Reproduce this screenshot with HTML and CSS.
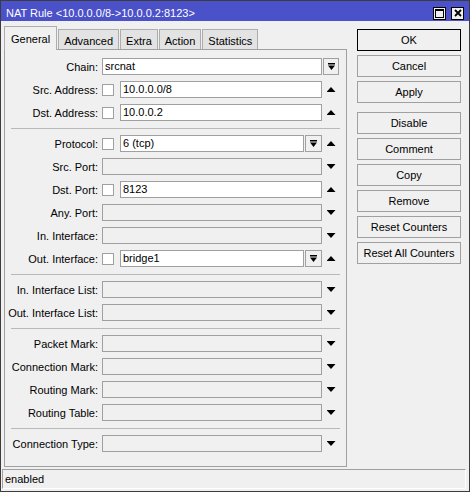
FILE: index.html
```html
<!DOCTYPE html>
<html lang="en">
<head>
  <meta charset="UTF-8">
  <title>NAT Rule</title>
  <link rel="stylesheet" href="styles.css">
</head>
<body>
  <div class="window">
    <div class="titlebar">
      <span class="title">NAT Rule &lt;10.0.0.0/8-&gt;10.0.0.2:8123&gt;</span>
      <span class="tb-btn">
        <svg width="9" height="9" viewBox="0 0 9 9"><rect x="0.5" y="0.5" width="8" height="8" fill="none" stroke="#000"/><rect x="0" y="0" width="9" height="2"/></svg>
      </span>
      <span class="tb-btn">
        <svg width="8" height="8" viewBox="0 0 8 8"><path d="M1 1L7 7M7 1L1 7" stroke="#000" stroke-width="1.8"/></svg>
      </span>
    </div>

    <div class="main">
      <div class="left">
        <div class="tabs">
          <div class="tab active">General</div>
          <div class="tab">Advanced</div>
          <div class="tab">Extra</div>
          <div class="tab">Action</div>
          <div class="tab">Statistics</div>
        </div>

        <div class="panel">
          <div class="row">
            <span class="lbl">Chain:</span>
            <div class="field"><div class="box">srcnat</div></div>
            <div class="side"><span class="drop"><svg width="7" height="7" viewBox="0 0 7 7"><path d="M0 0H7V1.5H0Z M0 2.5H7L3.5 7Z"/></svg></span></div>
          </div>
          <div class="row">
            <span class="lbl">Src. Address:</span>
            <div class="field"><span class="check"></span><div class="box">10.0.0.0/8</div></div>
            <div class="side"><span class="up"></span></div>
          </div>
          <div class="row">
            <span class="lbl">Dst. Address:</span>
            <div class="field"><span class="check"></span><div class="box">10.0.0.2</div></div>
            <div class="side"><span class="up"></span></div>
          </div>

          <div class="sep"></div>

          <div class="row">
            <span class="lbl">Protocol:</span>
            <div class="field"><span class="check"></span><div class="box">6 (tcp)</div><span class="drop"><svg width="7" height="7" viewBox="0 0 7 7"><path d="M0 0H7V1.5H0Z M0 2.5H7L3.5 7Z"/></svg></span></div>
            <div class="side"><span class="up"></span></div>
          </div>
          <div class="row">
            <span class="lbl">Src. Port:</span>
            <div class="field"><div class="box off"></div></div>
            <div class="side"><span class="down"></span></div>
          </div>
          <div class="row">
            <span class="lbl">Dst. Port:</span>
            <div class="field"><span class="check"></span><div class="box">8123</div></div>
            <div class="side"><span class="up"></span></div>
          </div>
          <div class="row">
            <span class="lbl">Any. Port:</span>
            <div class="field"><div class="box off"></div></div>
            <div class="side"><span class="down"></span></div>
          </div>
          <div class="row">
            <span class="lbl">In. Interface:</span>
            <div class="field"><div class="box off"></div></div>
            <div class="side"><span class="down"></span></div>
          </div>
          <div class="row">
            <span class="lbl">Out. Interface:</span>
            <div class="field"><span class="check"></span><div class="box">bridge1</div><span class="drop"><svg width="7" height="7" viewBox="0 0 7 7"><path d="M0 0H7V1.5H0Z M0 2.5H7L3.5 7Z"/></svg></span></div>
            <div class="side"><span class="up"></span></div>
          </div>

          <div class="sep"></div>

          <div class="row">
            <span class="lbl">In. Interface List:</span>
            <div class="field"><div class="box off"></div></div>
            <div class="side"><span class="down"></span></div>
          </div>
          <div class="row">
            <span class="lbl">Out. Interface List:</span>
            <div class="field"><div class="box off"></div></div>
            <div class="side"><span class="down"></span></div>
          </div>

          <div class="sep"></div>

          <div class="row">
            <span class="lbl">Packet Mark:</span>
            <div class="field"><div class="box off"></div></div>
            <div class="side"><span class="down"></span></div>
          </div>
          <div class="row">
            <span class="lbl">Connection Mark:</span>
            <div class="field"><div class="box off"></div></div>
            <div class="side"><span class="down"></span></div>
          </div>
          <div class="row">
            <span class="lbl">Routing Mark:</span>
            <div class="field"><div class="box off"></div></div>
            <div class="side"><span class="down"></span></div>
          </div>
          <div class="row">
            <span class="lbl">Routing Table:</span>
            <div class="field"><div class="box off"></div></div>
            <div class="side"><span class="down"></span></div>
          </div>

          <div class="sep"></div>

          <div class="row">
            <span class="lbl">Connection Type:</span>
            <div class="field"><div class="box off"></div></div>
            <div class="side"><span class="down"></span></div>
          </div>
        </div>
      </div>

      <div class="actions">
        <button class="btn default">OK</button>
        <button class="btn">Cancel</button>
        <button class="btn">Apply</button>
        <button class="btn spaced">Disable</button>
        <button class="btn">Comment</button>
        <button class="btn">Copy</button>
        <button class="btn">Remove</button>
        <button class="btn">Reset Counters</button>
        <button class="btn">Reset All Counters</button>
      </div>
    </div>

    <div class="status">enabled</div>
  </div>
</body>
</html>
```

FILE: styles.css
```css
body {
  margin: 0;
  background: #fff;
  font-family: 'Liberation Sans', Arial, sans-serif;
  font-size: 11px;
  color: #000;
}

.window {
  width: 470px;
  height: 492px;
  box-sizing: border-box;
  border: 1px solid #3c3c3c;
  background: #f0f0f0;
  display: flex;
  flex-direction: column;
}

/* Title bar */
.titlebar {
  height: 20px;
  box-sizing: border-box;
  padding: 4px 5px 0 5px;
  background: #4b51c8;
  color: #fff;
  display: flex;
  align-items: center;
}

.title {
  flex: 1;
  white-space: nowrap;
}

.tb-btn {
  width: 13px;
  height: 13px;
  box-sizing: border-box;
  border: 1px solid #000;
  background: #f0f0f0;
  margin-left: 5px;
  display: flex;
  align-items: center;
  justify-content: center;
}

.main {
  display: flex;
  align-items: flex-start;
  padding-left: 3px;
}

.left {
  width: 343px;
}

/* Tabs */
.tabs {
  display: flex;
  align-items: flex-end;
  height: 23px;
  margin-top: 5px;
}

.tab {
  height: 20px;
  box-sizing: border-box;
  padding: 2px 5px 0;
  margin-right: 1px;
  border: 1px solid #adadad;
  border-bottom: none;
  background: #e3e3e3;
  display: flex;
  align-items: center;
}

.tab.active {
  height: 24px;
  padding: 0 6px;
  margin-bottom: -1px;
  background: #f0f0f0;
  position: relative;
  z-index: 1;
}

/* Form panel */
.panel {
  border: 1px solid #a0a0a0;
  padding: 8px 0 14px;
  display: flex;
  flex-direction: column;
  gap: 6px;
}

.row {
  display: flex;
  align-items: center;
  height: 17px;
}

.lbl {
  width: 93px;
  margin-right: 4px;
  text-align: right;
  white-space: nowrap;
}

.field {
  width: 220px;
  height: 17px;
  display: flex;
  align-items: center;
}

.side {
  width: 18px;
  height: 17px;
  display: flex;
  align-items: center;
  justify-content: center;
}

.box {
  flex: 1;
  height: 17px;
  box-sizing: border-box;
  border: 1px solid #a0a0a0;
  background: #fff;
  padding: 0 2px;
  line-height: 15px;
  white-space: nowrap;
  overflow: hidden;
}

.box.off {
  background: #f0f0f0;
}

.check {
  flex: none;
  width: 12px;
  height: 12px;
  box-sizing: border-box;
  border: 1px solid #a0a0a0;
  background: #fff;
  margin-right: 6px;
}

.drop {
  flex: none;
  width: 16px;
  height: 17px;
  box-sizing: border-box;
  border: 1px solid #a0a0a0;
  background: #f0f0f0;
  display: flex;
  align-items: center;
  justify-content: center;
}

.field .drop {
  width: 17px;
  margin-left: 1px;
}

.up,
.down {
  width: 9px;
  height: 5px;
  background: #000;
}

.up {
  clip-path: polygon(50% 0, 100% 100%, 0 100%);
}

.down {
  clip-path: polygon(0 0, 100% 0, 50% 100%);
}

.sep {
  height: 1px;
  margin: 1px 6px 0;
  background: #b9b9b9;
}

/* Buttons */
.actions {
  width: 104px;
  margin: 8px 0 0 10px;
  display: flex;
  flex-direction: column;
  gap: 4px;
}

.btn {
  height: 22px;
  padding: 0;
  box-sizing: border-box;
  border: 1px solid #a0a0a0;
  background: #f0f0f0;
  font: inherit;
  color: #000;
}

.btn.default {
  border-color: #000;
}

.btn.spaced {
  margin-top: 5px;
}

/* Status bar */
.status {
  height: 20px;
  box-sizing: border-box;
  margin: 2px 3px 0 1px;
  padding-left: 2px;
  border-top: 1px solid #a0a0a0;
  border-left: 1px solid #a0a0a0;
  border-right: 1px solid #fff;
  border-bottom: 1px solid #fff;
  display: flex;
  align-items: center;
}
```
